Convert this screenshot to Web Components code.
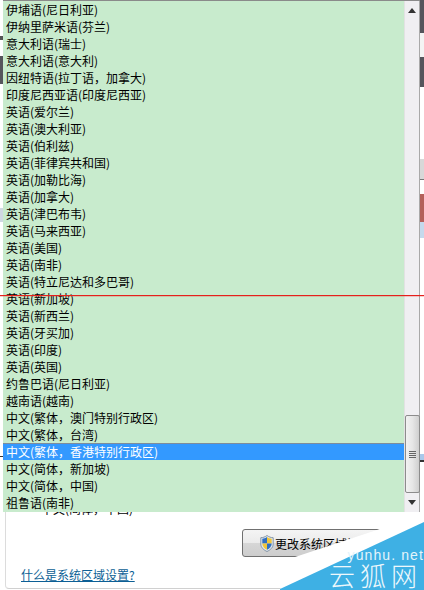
<!DOCTYPE html>
<html lang="zh">
<head>
<meta charset="utf-8">
<title>区域设置</title>
<style>
    html, body { margin: 0; background: #fff; }
</style>
</head>
<body>
<region-page>
    <region-strip slot="left" blocks="36:#fff,4:#555,16:#fff,28:#55555c,124:#fff,14:#cfd8e2,234:#fff,1:#333,100:#fff"></region-strip>
    <region-panel>
        <span slot="value">中文(简体，中国)</span>
        <uac-button slot="action">更改系统区域设置</uac-button>
        <a slot="link" href="#">什么是系统区域设置?</a>
    </region-panel>
    <region-strip slot="right" blocks="33:#55555c,24:#f4f4f4,30:#55555c,72:#fff,20:#d8d8d8,1:#777,14:#fff,28:#b4605a,16:#c5d9ec,216:#fff,6:#a9c8ea,2:#333,100:#fff"></region-strip>

    <locale-menu slot="overlay">
        <locale-option>伊埔语(尼日利亚)</locale-option>
        <locale-option>伊纳里萨米语(芬兰)</locale-option>
        <locale-option>意大利语(瑞士)</locale-option>
        <locale-option>意大利语(意大利)</locale-option>
        <locale-option>因纽特语(拉丁语，加拿大)</locale-option>
        <locale-option>印度尼西亚语(印度尼西亚)</locale-option>
        <locale-option>英语(爱尔兰)</locale-option>
        <locale-option>英语(澳大利亚)</locale-option>
        <locale-option>英语(伯利兹)</locale-option>
        <locale-option>英语(菲律宾共和国)</locale-option>
        <locale-option>英语(加勒比海)</locale-option>
        <locale-option>英语(加拿大)</locale-option>
        <locale-option>英语(津巴布韦)</locale-option>
        <locale-option>英语(马来西亚)</locale-option>
        <locale-option>英语(美国)</locale-option>
        <locale-option>英语(南非)</locale-option>
        <locale-option>英语(特立尼达和多巴哥)</locale-option>
        <locale-option>英语(新加坡)</locale-option>
        <locale-option>英语(新西兰)</locale-option>
        <locale-option>英语(牙买加)</locale-option>
        <locale-option>英语(印度)</locale-option>
        <locale-option>英语(英国)</locale-option>
        <locale-option>约鲁巴语(尼日利亚)</locale-option>
        <locale-option>越南语(越南)</locale-option>
        <locale-option>中文(繁体，澳门特别行政区)</locale-option>
        <locale-option>中文(繁体，台湾)</locale-option>
        <locale-option selected>中文(繁体，香港特别行政区)</locale-option>
        <locale-option>中文(简体，新加坡)</locale-option>
        <locale-option>中文(简体，中国)</locale-option>
        <locale-option>祖鲁语(南非)</locale-option>
    </locale-menu>
    <site-watermark slot="overlay"></site-watermark>
    <red-rule slot="overlay"></red-rule>
</region-page>

<script>
const FONT = `"Noto Sans CJK SC", "Liberation Sans", sans-serif`

class RegionPage extends HTMLElement {
    constructor() {
        super()
        this.attachShadow({ mode: "open" }).innerHTML = /*html*/ `
            <style>
                :host {
                    display: flex;
                    position: relative;
                    width: 424px;
                    height: 590px;
                    overflow: hidden;
                    background: #fff;
                    font: 12px/17px ${FONT};
                    color: #000;
                }
                #middle { flex: 1; display: flex; min-width: 0; }
            </style>
            <slot name="left"></slot>
            <div id="middle"><slot></slot></div>
            <slot name="right"></slot>
            <slot name="overlay"></slot>
        `
    }
}

class RedRule extends HTMLElement {
    constructor() {
        super()
        this.attachShadow({ mode: "open" }).innerHTML = /*html*/ `
            <style>
                :host {
                    position: absolute;
                    left: 0;
                    right: 0;
                    top: 295px;
                    height: 1px;
                    background: #e5201c;
                    box-shadow: 0 1px 0 rgba(229, 60, 50, .25);
                }
            </style>
        `
    }
}

// the window behind the menu only shows as thin strips of colour
class RegionStrip extends HTMLElement {
    constructor() {
        super()
        this.attachShadow({ mode: "open" })
    }

    connectedCallback() {
        const blocks = this.getAttribute("blocks").split(",").map(part => {
            const [height, color] = part.split(":")
            return `<div style="height:${height}px;background:${color}"></div>`
        })
        this.shadowRoot.innerHTML = `
            <style>
                :host { display: flex; flex-direction: column; width: 4px; height: 590px; overflow: hidden; flex: none; }
            </style>
            ${blocks.join("")}
        `
    }
}

class RegionPanel extends HTMLElement {
    constructor() {
        super()
        this.attachShadow({ mode: "open" }).innerHTML = /*html*/ `
            <style>
                :host {
                    display: flex;
                    flex-direction: column;
                    flex: 1;
                    box-sizing: border-box;
                    height: 589px;
                    margin-left: 1px;
                    padding: 500px 0 0 15px;
                    border-left: 1px solid #dcdcdc;
                    border-bottom: 1px solid #d0d0d0;
                    border-bottom-left-radius: 4px;
                    background: #fff;
                }
                #value { padding-left: 20px; height: 23px; }
                #action { display: flex; justify-content: flex-end; padding-right: 39px; height: 28px; margin-top: 6px; }
                #link { margin-top: 9px; }
                ::slotted(a) { color: #0d5f95; text-decoration: underline; font-size: 12px; }
            </style>
            <div id="value"><slot name="value"></slot></div>
            <div id="action"><slot name="action"></slot></div>
            <div id="link"><slot name="link"></slot></div>
        `
    }
}

class UacButton extends HTMLElement {
    constructor() {
        super()
        this.attachShadow({ mode: "open" }).innerHTML = /*html*/ `
            <style>
                :host {
                    display: flex;
                    align-items: center;
                    gap: 1px;
                    box-sizing: border-box;
                    width: 139px;
                    height: 28px;
                    padding-left: 17px;
                    border: 1px solid #707070;
                    border-radius: 3px;
                    background: linear-gradient(#f4f4f4, #ebebeb 48%, #d6d6d6 52%, #cdcdcd);
                    white-space: nowrap;
                    overflow: hidden;
                    color: #000;
                }
                svg { flex: none; width: 14px; height: 17px; }
            </style>
            <svg viewBox="0 0 14 17">
                <path d="M7 .5C5 2 3 2.600 .8 2.700V9c0 3.600 3 6 6.200 7.500C10.200 15 13.200 12.600 13.200 9V2.700C11 2.600 9 2 7 .5Z" fill="#dfe8f0" stroke="#6f8296" stroke-width=".8"/>
                <path d="M7 2C5.500 3 4 3.500 2.300 3.700V8.500H7Z" fill="#2f6fc2"/>
                <path d="M7 2C8.500 3 10 3.500 11.700 3.700V8.500H7Z" fill="#f0c63a"/>
                <path d="M2.300 8.500H7V14.800C4.500 13.500 2.300 11.500 2.300 8.500Z" fill="#f0c63a"/>
                <path d="M11.700 8.500H7V14.800C9.500 13.500 11.700 11.500 11.700 8.500Z" fill="#2f6fc2"/>
            </svg>
            <slot></slot>
        `
    }
}

class LocaleMenu extends HTMLElement {
    constructor() {
        super()
        this.attachShadow({ mode: "open" }).innerHTML = /*html*/ `
            <style>
                :host {
                    position: absolute;
                    left: 3px;
                    top: 0;
                    width: 417px;
                    height: 512px;
                    display: flex;
                    box-sizing: border-box;
                    border-top: 1px solid #8a8a8a;
                    background: #c8ebcd;
                }
                #list { flex: 1; display: flex; flex-direction: column; min-width: 0; }
                #bar {
                    flex: none;
                    width: 16px;
                    display: flex;
                    flex-direction: column;
                    align-items: center;
                    box-sizing: border-box;
                    background: #f0eff2;
                    border-left: 1px solid #e2e2e2;
                    border-right: 1px solid #a9a9a9;
                }
                .arrow { width: 0; height: 0; border: 4px solid transparent; }
                #up { border-top: 0; border-bottom: 5px solid #333; margin-top: 7px; }
                #down { border-bottom: 0; border-top: 5px solid #333; margin-top: 7px; }
                #thumb {
                    box-sizing: border-box;
                    width: 15px;
                    height: 78px;
                    margin-top: 402px;
                    display: flex;
                    flex-direction: column;
                    align-items: center;
                    justify-content: center;
                    gap: 1px;
                    border: 1px solid #8c8c8c;
                    border-radius: 2px;
                    background: linear-gradient(90deg, #f2f2f2, #e6e6e6 50%, #cfcfcf);
                }
                #thumb i { display: block; width: 7px; height: 1px; background: #666; }
            </style>
            <div id="list"><slot></slot></div>
            <div id="bar">
                <div id="up" class="arrow"></div>
                <div id="thumb"><i></i><i></i><i></i><i></i></div>
                <div id="down" class="arrow"></div>
            </div>
        `
    }
}

class LocaleOption extends HTMLElement {
    constructor() {
        super()
        this.attachShadow({ mode: "open" }).innerHTML = /*html*/ `
            <style>
                :host {
                    display: block;
                    flex: none;
                    box-sizing: border-box;
                    height: 17px;
                    padding-left: 3px;
                    line-height: 17px;
                    white-space: nowrap;
                }
                :host([selected]) {
                    background: #3399ff;
                    color: #fff;
                    box-shadow: inset 0 1px 0 #7d8c9c;
                }
            </style>
            <slot></slot>
        `
    }
}

class SiteWatermark extends HTMLElement {
    constructor() {
        super()
        this.attachShadow({ mode: "open" }).innerHTML = /*html*/ `
            <style>
                :host {
                    position: absolute;
                    left: 280px;
                    top: 518px;
                    width: 144px;
                    height: 72px;
                }
                svg { position: absolute; inset: 0; }
                #url {
                    position: absolute;
                    right: 0;
                    top: 31px;
                    font: 14px/12px "Liberation Sans", sans-serif;
                    letter-spacing: 1.1px;
                    color: #e4f4fb;
                    white-space: nowrap;
                }
                #name {
                    position: absolute;
                    right: 2px;
                    top: 44px;
                    font: 300 26px/26px ${FONT};
                    letter-spacing: 5px;
                    color: #eef8fc;
                    white-space: nowrap;
                }
            </style>
            <svg viewBox="0 0 144 72" width="144" height="72">
                <polygon points="12,40 100,11 144,0 144,72 0,72" fill="#fff"/>
                <polygon points="0,71 144,4 144,72 0,72" fill="#3eb0e4"/>
            </svg>
            <div id="url">yunhu. net</div>
            <div id="name">云狐网</div>
        `
    }
}

customElements.define("region-page", RegionPage)
customElements.define("red-rule", RedRule)
customElements.define("region-strip", RegionStrip)
customElements.define("region-panel", RegionPanel)
customElements.define("uac-button", UacButton)
customElements.define("locale-menu", LocaleMenu)
customElements.define("locale-option", LocaleOption)
customElements.define("site-watermark", SiteWatermark)
</script>
</body>
</html>
